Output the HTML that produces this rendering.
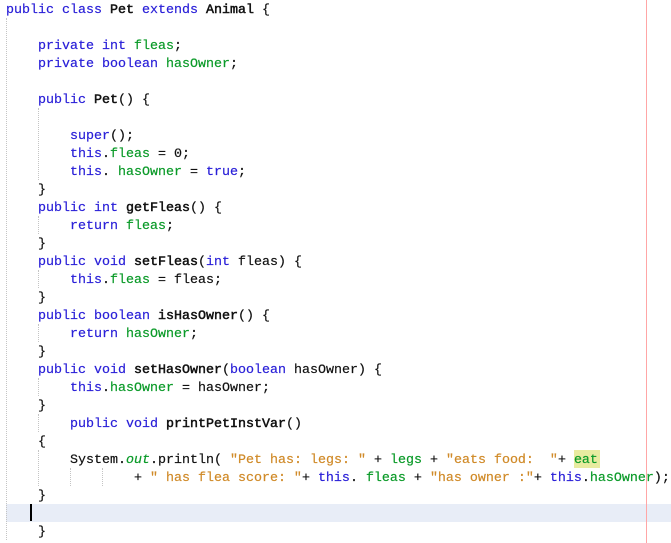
<!DOCTYPE html>
<html><head><meta charset="utf-8">
<style>
html,body{margin:0;padding:0;background:#fff;width:671px;height:543px;overflow:hidden}
#e{position:relative;width:671px;height:543px;overflow:hidden;font-family:"Liberation Mono",monospace;font-size:13.33px;color:#111}
.l{position:absolute;left:6px;height:18px;line-height:18px;white-space:pre;z-index:2;font-weight:400;margin-top:2px;-webkit-text-stroke:.2px}
.k{color:#2a20d8}.f{color:#0a9a28}.s{color:#d08a28}.m{color:#111;-webkit-text-stroke:.5px #111}
.g{position:absolute;width:0;border-left:1px dotted #c4c4c4;z-index:1}
.i{font-style:italic}
</style></head><body><div id="e">
<div style="position:absolute;left:6px;top:504px;width:665px;height:18px;background:#e8edf7"></div>
<div style="position:absolute;left:574px;top:450px;width:26px;height:18px;background:#e8eba0"></div>
<div style="position:absolute;left:646px;top:0;width:1px;height:543px;background:#ffa6a6;z-index:3"></div>
<div style="position:absolute;left:30px;top:504px;width:2px;height:17px;background:#000;z-index:3"></div>
<div class="g" style="left:6px;top:18px;height:522px"></div>
<div class="g" style="left:38px;top:108px;height:72px"></div>
<div class="g" style="left:38px;top:216px;height:18px"></div>
<div class="g" style="left:38px;top:270px;height:18px"></div>
<div class="g" style="left:38px;top:324px;height:18px"></div>
<div class="g" style="left:38px;top:378px;height:18px"></div>
<div class="g" style="left:38px;top:414px;height:18px"></div>
<div class="g" style="left:38px;top:450px;height:36px"></div>
<div class="g" style="left:70px;top:468px;height:18px"></div>
<div class="g" style="left:102px;top:468px;height:18px"></div>
<div class="l" style="top:0"><span class="k">public class</span> <span class="m">Pet</span> <span class="k">extends</span> <span class="m">Animal</span> {</div>
<div class="l" style="top:36px">    <span class="k">private int</span> <span class="f">fleas</span>;</div>
<div class="l" style="top:54px">    <span class="k">private boolean</span> <span class="f">hasOwner</span>;</div>
<div class="l" style="top:90px">    <span class="k">public</span> <span class="m">Pet</span>() {</div>
<div class="l" style="top:126px">        <span class="k">super</span>();</div>
<div class="l" style="top:144px">        <span class="k">this</span>.<span class="f">fleas</span> = 0;</div>
<div class="l" style="top:162px">        <span class="k">this</span>. <span class="f">hasOwner</span> = <span class="k">true</span>;</div>
<div class="l" style="top:180px">    }</div>
<div class="l" style="top:198px">    <span class="k">public int</span> <span class="m">getFleas</span>() {</div>
<div class="l" style="top:216px">        <span class="k">return</span> <span class="f">fleas</span>;</div>
<div class="l" style="top:234px">    }</div>
<div class="l" style="top:252px">    <span class="k">public void</span> <span class="m">setFleas</span>(<span class="k">int</span> fleas) {</div>
<div class="l" style="top:270px">        <span class="k">this</span>.<span class="f">fleas</span> = fleas;</div>
<div class="l" style="top:288px">    }</div>
<div class="l" style="top:306px">    <span class="k">public boolean</span> <span class="m">isHasOwner</span>() {</div>
<div class="l" style="top:324px">        <span class="k">return</span> <span class="f">hasOwner</span>;</div>
<div class="l" style="top:342px">    }</div>
<div class="l" style="top:360px">    <span class="k">public void</span> <span class="m">setHasOwner</span>(<span class="k">boolean</span> hasOwner) {</div>
<div class="l" style="top:378px">        <span class="k">this</span>.<span class="f">hasOwner</span> = hasOwner;</div>
<div class="l" style="top:396px">    }</div>
<div class="l" style="top:414px">        <span class="k">public void</span> <span class="m">printPetInstVar</span>()</div>
<div class="l" style="top:432px">    {</div>
<div class="l" style="top:450px">        System.<span class="f i">out</span>.println( <span class="s">"Pet has: legs: "</span> + <span class="f">legs</span> + <span class="s">"eats food:  "</span>+ <span class="f">eat</span></div>
<div class="l" style="top:468px">                + <span class="s">" has flea score: "</span>+ <span class="k">this</span>. <span class="f">fleas</span> + <span class="s">"has owner :"</span>+ <span class="k">this</span>.<span class="f">hasOwner</span>);</div>
<div class="l" style="top:486px">    }</div>
<div class="l" style="top:522px">    }</div>
</div></body></html>
